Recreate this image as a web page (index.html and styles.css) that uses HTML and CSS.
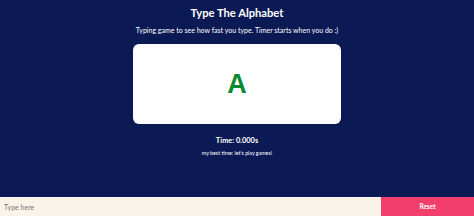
FILE: index.html
```html
<!DOCTYPE html>
<html lang="en">
<head>
    <meta charset="UTF-8">
    <meta name="viewport" content="width=device-width, initial-scale=1.0">
    <title>Type The Alphabet</title>
    <link rel="stylesheet" href="styles.css">
</head>
<body>
    <div class="main">
        <h1 class="title">Type The Alphabet</h1>
        <p class="subtitle">Typing game to see how fast you type. Timer starts when you do :)</p>

        <div class="card">
            <div class="letter" id="letter">A</div>
        </div>

        <div class="timer">Time: <span id="time">0.000s</span></div>
        <div class="best">my best time: <span id="best">let's play games!</span></div>
    </div>

    <div class="input-bar">
        <input class="type-input" id="type-input" type="text" placeholder="Type here">
        <button class="reset" id="reset">Reset</button>
    </div>
</body>
</html>
```

FILE: styles.css
```css
body {
    margin: 0;
    padding: 0;
    font-family: Lato, "Open Sans", sans-serif;
    background-color: #0b1a54;
    color: #fff;
    height: 100vh;
    display: flex;
    flex-direction: column;
    overflow: hidden;
}

.main {
    flex: 1;
    display: flex;
    flex-direction: column;
    align-items: center;
}

.title {
    margin: 6px 0 0;
    font-size: 11.2px;
    font-weight: bold;
    line-height: 14px;
}

.subtitle {
    margin: 5px 0 0;
    font-size: 7px;
    line-height: 10px;
}

.card {
    margin-top: 9px;
    width: 208px;
    height: 80px;
    background-color: #fff;
    border-radius: 6px;
    display: flex;
    align-items: center;
    justify-content: center;
}

.letter {
    font-family: "Liberation Sans", Arial, sans-serif;
    font-weight: bold;
    font-size: 27px;
    color: #078a2f;
}

.timer {
    margin-top: 12px;
    font-size: 7.4px;
    font-weight: bold;
    line-height: 10px;
}

.best {
    margin-top: 3px;
    font-size: 5.3px;
    line-height: 8px;
}

.input-bar {
    display: flex;
    height: 19px;
}

.type-input {
    flex: 1;
    border: none;
    margin: 0;
    padding: 0 4px;
    background-color: #faf3ea;
    font-family: Lato, "Open Sans", sans-serif;
    font-size: 7px;
    color: #333;
    outline: none;
}

.type-input::placeholder {
    color: #777;
}

.reset {
    width: 93px;
    border: none;
    margin: 0;
    padding: 0;
    background-color: #f13e6b;
    color: #fff;
    font-family: Lato, "Open Sans", sans-serif;
    font-size: 6.5px;
    font-weight: bold;
    cursor: pointer;
}
```
